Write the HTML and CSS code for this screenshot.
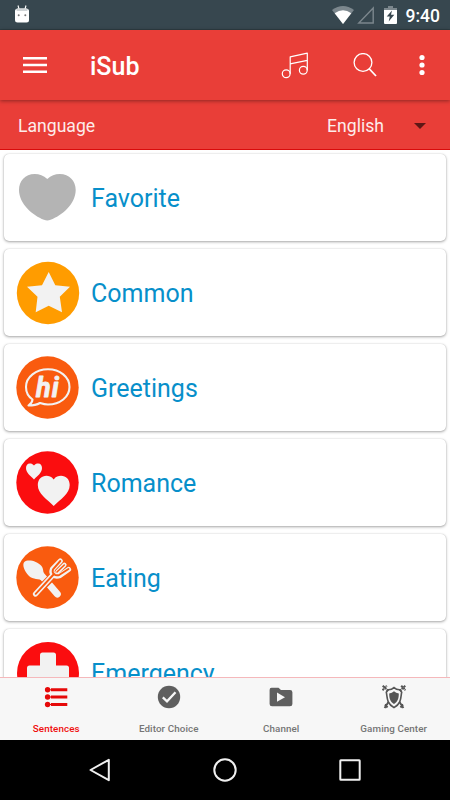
FILE: index.html
```html
<!DOCTYPE html>
<html lang="en">
<head>
  <meta charset="UTF-8">
  <meta name="viewport" content="width=device-width, initial-scale=1.0">
  <title>iSub</title>
  <link rel="stylesheet" href="styles.css">
</head>
<body>
  <div class="screen">
    <div class="status-bar">
      <svg class="droid" width="16" height="18" viewBox="0 0 16 18">
        <path d="M4 0.5L5 4M12 0.5L11 4" stroke="#fff" stroke-width="1.1"/>
        <path d="M1 6Q1 3.5 4 3.5H12Q15 3.5 15 6V15Q15 17.5 12.5 17.5H3.5Q1 17.5 1 15Z" fill="#fff"/>
        <path d="M2 4.5Q3 3.5 4 3.5H12Q13 3.5 14 4.5L13 6H3Z" fill="#cfd4d6"/>
        <circle cx="4.7" cy="10.2" r="1" fill="#777"/>
        <circle cx="11.3" cy="10.2" r="1" fill="#777"/>
      </svg>
      <div class="status-right">
        <svg width="22" height="18" viewBox="0 0 22 18">
          <path d="M0 4Q11 -4 22 4L11 18Z" fill="#7c878d"/>
          <path d="M2.7 7.3Q11 1.3 19.3 7.3L11 18Z" fill="#fff"/>
        </svg>
        <svg width="18" height="18" viewBox="0 0 18 18">
          <path d="M16.2 2V17H1.8Z" fill="none" stroke="#7c878d" stroke-width="1.4"/>
        </svg>
        <svg class="battery" width="13" height="18" viewBox="0 0 13 18">
          <path d="M4 0H9V2H13V5H0V2H4Z" fill="#7c878d"/>
          <path d="M0 4H13V17Q13 18 12 18H1Q0 18 0 17Z" fill="#fff"/>
          <path d="M8 4.5L2.7 10.5H5.8L4.7 15.5L10.3 8.8H7Z" fill="#37474f"/>
        </svg>
        <span class="clock">9:40</span>
      </div>
    </div>

    <div class="toolbar">
      <svg class="menu" width="24" height="18" viewBox="0 0 24 18">
        <path d="M0 2.3H24M0 9H24M0 15.7H24" stroke="#fff" stroke-width="2.5"/>
      </svg>
      <h1>iSub</h1>
      <svg class="music" width="28" height="28" viewBox="0 0 28 28" fill="none" stroke="#fff" stroke-width="1.2">
        <circle cx="5.2" cy="22.8" r="3.9"/>
        <circle cx="22.3" cy="19.2" r="3.9"/>
        <path d="M9.2 22.8V5.8L26.3 2.2V19.2M9.2 12.9L26.3 9.3" stroke-linejoin="round"/>
      </svg>
      <svg class="search" width="24" height="24" viewBox="0 0 24 24" fill="none" stroke="#fff">
        <circle cx="10" cy="9.5" r="8.9" stroke-width="1.3"/>
        <path d="M16 15.5L23 23" stroke-width="1.8"/>
      </svg>
      <svg class="more" width="6" height="22" viewBox="0 0 6 22" fill="#fff">
        <circle cx="3" cy="3.5" r="2.6"/>
        <circle cx="3" cy="11" r="2.6"/>
        <circle cx="3" cy="18.5" r="2.6"/>
      </svg>
    </div>

    <div class="language">
      <span>Language</span>
      <span class="selected">English</span>
      <svg width="12" height="6" viewBox="0 0 12 6"><path d="M0 0H12L6 6Z" fill="#5f1715"/></svg>
    </div>

    <div class="list">
      <div class="card">
        <svg width="64" height="64" viewBox="0 0 64 64">
          <path d="M31.3 13C27.5 9.5 23.5 8 18.7 8C9 8 3 15 3 24C3 38 17 49.5 28 53.8Q31.3 55 34.6 53.8C46 49.5 59.7 38 59.7 24C59.7 15 53.5 8 43.7 8C39 8 35 9.5 31.3 13Z" fill="#b4b4b4"/>
        </svg>
        <span>Favorite</span>
      </div>
      <div class="card">
        <svg width="64" height="64" viewBox="0 0 64 64">
          <circle cx="32" cy="32" r="31.2" fill="#ff9c00"/>
          <path d="M32.7 11L39.3 24.3L54 25.7L43.8 35.7L46 51.3L32.7 44.7L19.7 51.3L21.5 35.7L11 25.7L26 24.3Z" fill="#f2f2f2"/>
        </svg>
        <span>Common</span>
      </div>
      <div class="card">
        <svg width="64" height="64" viewBox="0 0 64 64">
          <circle cx="31.5" cy="31.5" r="31.2" fill="#f95b0f"/>
          <path d="M16.5 43.5C11.5 40 10 35.5 10 31C10 21 20 13.3 32 13.3C44 13.3 53.5 21 53.5 31C53.5 41 44 48.5 32 48.5C29 48.5 26.5 47.8 24 47C20.5 49 17 49.5 12.5 49.5C14.5 48 16.5 46 16.5 43.5Z" fill="none" stroke="#f2f2f2" stroke-width="2.1" stroke-linejoin="round"/>
          <text class="hi" x="20" y="40.5">hi</text>
        </svg>
        <span>Greetings</span>
      </div>
      <div class="card">
        <svg width="64" height="64" viewBox="0 0 64 64">
          <circle cx="31.5" cy="31.5" r="31.2" fill="#fb0d0f"/>
          <path d="M18 14.5C16.5 12.8 14.8 12.5 13.8 12.5C11.5 12.5 10 14.5 10 17C10 22 14.5 24.5 18 28.5C21.5 24.5 26 22 26 17C26 14.5 24.5 12.5 22.2 12.5C21 12.5 19.3 12.8 18 14.5Z" fill="#f2f2f2"/>
          <path d="M37.7 28.5C35.5 25.5 32.5 24.8 30.5 24.8C25.5 24.8 21.8 28.5 21.8 34C21.8 43 31 48 37.7 55C44.5 48 53.7 43 53.7 34C53.7 28.5 50 24.8 45 24.8C42.5 24.8 39.8 25.5 37.7 28.5Z" fill="#f2f2f2"/>
        </svg>
        <span>Romance</span>
      </div>
      <div class="card">
        <svg width="64" height="64" viewBox="0 0 64 64" stroke-linecap="round" stroke-linejoin="round" fill="none">
          <circle cx="31.5" cy="31.5" r="31.2" fill="#f95b0f"/>
          <path d="M8.3 16C12 13 21 15 25.5 20C28 23 26.5 27 29 30L32 32L27 35C23 32 17 34 13 30C8 25 6 18.5 8.3 16Z" fill="#f2f2f2"/>
          <path d="M25 29L41.3 48" stroke="#f2f2f2" stroke-width="7"/>
          <!-- fork: halo, white body, then the hollow inside -->
          <path d="M20 47L37 30" stroke="#f95b0f" stroke-width="7.6"/>
          <g stroke="#f2f2f2" stroke-width="5.2">
            <path d="M19.5 48L37 29"/>
            <path d="M44.3 15L36.5 23Q35 27 37.500 29Q40 31 44 29.500L52.500 23.500"/>
          </g>
          <path d="M48.300 19L41.500 26" stroke="#f2f2f2" stroke-width="4.600"/>
          <g stroke="#f95b0f" stroke-width="1.900">
            <path d="M19.700 47.800L38 28"/>
            <path d="M44.300 15L37 23.300Q36 26.500 38 28.200Q40.300 30 43.500 28.800L52.500 23"/>
            <path d="M48.300 19L41 26" stroke-width="1.600"/>
          </g>
        </svg>
        <span>Eating</span>
      </div>
      <div class="card">
        <svg width="64" height="64" viewBox="0 0 64 64">
          <circle cx="32" cy="32" r="31" fill="#fb0d0f"/>
          <rect x="24" y="11.5" width="16" height="42" rx="2.5" fill="#f2f2f2"/>
          <rect x="11" y="24.500" width="42" height="16" rx="2.500" fill="#f2f2f2"/>
        </svg>
        <span>Emergency</span>
      </div>
    </div>

    <div class="tabs">
      <div class="tab active">
        <svg width="24" height="24" viewBox="0 0 24 24">
          <path d="M7 4.8H23.3M7 12H23.3M7 19.5H23.3" stroke="#e60a0a" stroke-width="3"/>
          <path d="M4 4.8H7M4 12H7M4 19.5H7" stroke="#e60a0a" stroke-width="1"/>
          <g fill="#e60a0a"><circle cx="3.6" cy="4.8" r="2.7"/><circle cx="3.6" cy="12" r="2.7"/><circle cx="3.6" cy="19.5" r="2.7"/></g>
        </svg>
        <span>Sentences</span>
      </div>
      <div class="tab">
        <svg width="24" height="24" viewBox="0 0 24 24">
          <circle cx="12" cy="12" r="11.2" fill="#5f5f5f"/>
          <path d="M5.8 12.3L10 16.3L18.5 7.3" fill="none" stroke="#f7f7f7" stroke-width="2.3"/>
        </svg>
        <span>Editor Choice</span>
      </div>
      <div class="tab">
        <svg width="24" height="24" viewBox="0 0 24 24">
          <path d="M2.5 2.8H9.5L12 5H21Q23.4 5 23.4 7.2V19Q23.4 21.2 21 21.2H3Q0.6 21.2 0.6 19V5Q0.6 2.8 2.5 2.8Z" fill="#5f5f5f"/>
          <path d="M8 7.5V16.8L16 12.2Z" fill="#f7f7f7"/>
        </svg>
        <span>Channel</span>
      </div>
      <div class="tab">
        <svg width="24" height="24" viewBox="0 0 24 24" fill="none" stroke="#555">
          <path d="M0.500 5.200L4.800 0.700M19.200 0.700L23.500 5.200M0.700 0.800L6.300 5.900M23.300 0.800L17.700 5.900" stroke-width="2" stroke-dasharray="2.200 0.500"/>
          <path d="M6.500 17L2.600 23M3 19.500L5.500 22.500M17.500 17L21.400 23M21 19.500L18.500 22.500" stroke-width="2"/>
          <path d="M12 2.600Q9.500 5 6 4.800L4.300 7.200C5.500 12 4 18 12 22.600C20 18 18.500 12 19.700 7.200L18 4.800Q14.500 5 12 2.600Z" stroke-width="1.600"/>
          <path d="M12 6.300Q10 8.300 7.200 8.500C7.200 13 8 16.500 12 18.900C16 16.500 16.800 13 16.800 8.500Q14 8.300 12 6.300Z" fill="#555" stroke="none"/>
        </svg>
        <span>Gaming Center</span>
      </div>
    </div>

    <div class="nav-bar">
      <svg width="24" height="24" viewBox="0 0 24 24"><path d="M20.800 1.800V22.200L2.500 12Z"/></svg>
      <svg width="24" height="24" viewBox="0 0 24 24"><circle cx="12" cy="12" r="10.700"/></svg>
      <svg width="24" height="24" viewBox="0 0 24 24"><rect x="2.300" y="2.300" width="19.400" height="19.400" rx="0.500"/></svg>
    </div>
  </div>
</body>
</html>
```

FILE: styles.css
```css
* {
  box-sizing: border-box;
}
body {
  margin: 0;
  font-family: Roboto, sans-serif;
  background: #fff;
}
svg {
  display: block;
  flex: none;
}
.screen {
  width: 450px;
  height: 800px;
  display: flex;
  flex-direction: column;
  overflow: hidden;
}
.status-bar {
  height: 30px;
  flex: none;
  display: flex;
  justify-content: space-between;
  align-items: center;
  padding: 1px 10px 0 14px;
  background: #37474f;
  border-bottom: 1px solid #2f3d43;
}
.droid {
  margin-bottom: 2px;
}
.status-right {
  display: flex;
  align-items: center;
  gap: 3px;
}
.battery {
  margin-left: 6px;
}
.clock {
  margin-left: 6px;
  padding-top: 1px;
  color: #fff;
  font-size: 17.5px;
  font-weight: 500;
}
.toolbar {
  height: 70px;
  flex: none;
  display: flex;
  align-items: center;
  padding: 0 25px 0 23px;
  background: #e93e38;
  box-shadow: 0 1px 4px rgba(0, 0, 0, 0.4);
  z-index: 1;
}
.toolbar h1 {
  margin: 3px auto 0 43px;
  color: #fff;
  font-size: 25px;
  font-weight: 500;
  line-height: 30px;
}
.search {
  margin-left: 44px;
}
.more {
  margin-left: 42px;
}
.language {
  height: 50px;
  flex: none;
  display: flex;
  align-items: center;
  padding: 2px 24px 0 18px;
  background: #e93e38;
  border-bottom: 1px solid #d90b0b;
  color: #fdeceb;
  font-size: 17.6px;
}
.language .selected {
  margin-left: auto;
  margin-right: 30px;
}
.list {
  flex: 1;
  min-height: 0;
  overflow: hidden;
  padding: 4px 4px 0;
  display: flex;
  flex-direction: column;
  gap: 8px;
}
.card {
  height: 87px;
  flex: none;
  display: flex;
  align-items: center;
  gap: 11px;
  padding: 1px 12px 0;
  background: #fff;
  border-radius: 5px;
  box-shadow: 0 1px 3px rgba(0, 0, 0, 0.35), 0 0 1px rgba(0, 0, 0, 0.2);
  color: #078fca;
  font-size: 25px;
}
.card span {
  padding-top: 1px;
}
.hi {
  fill: #f2f2f2;
  stroke: #f2f2f2;
  stroke-width: 0.8;
  stroke-linejoin: round;
  font-size: 27px;
  font-weight: 700;
  font-style: italic;
  letter-spacing: 1px;
}
.tabs {
  height: 63px;
  flex: none;
  display: grid;
  grid-template-columns: repeat(4, 1fr);
  background: #f7f7f7;
  border-top: 1px solid #f5b8bb;
}
.tab {
  display: flex;
  flex-direction: column;
  align-items: center;
  gap: 13px;
  padding-top: 7px;
  color: #757575;
  font-size: 9.8px;
  font-weight: 500;
  letter-spacing: 0.1px;
  line-height: 14px;
  white-space: nowrap;
}
.active {
  color: #f00d0d;
}
.nav-bar {
  height: 60px;
  flex: none;
  display: flex;
  justify-content: center;
  align-items: center;
  gap: 101px;
  background: #000;
}
.nav-bar svg {
  fill: none;
  stroke: #f0f0f0;
  stroke-width: 2;
  stroke-linejoin: round;
}
```
